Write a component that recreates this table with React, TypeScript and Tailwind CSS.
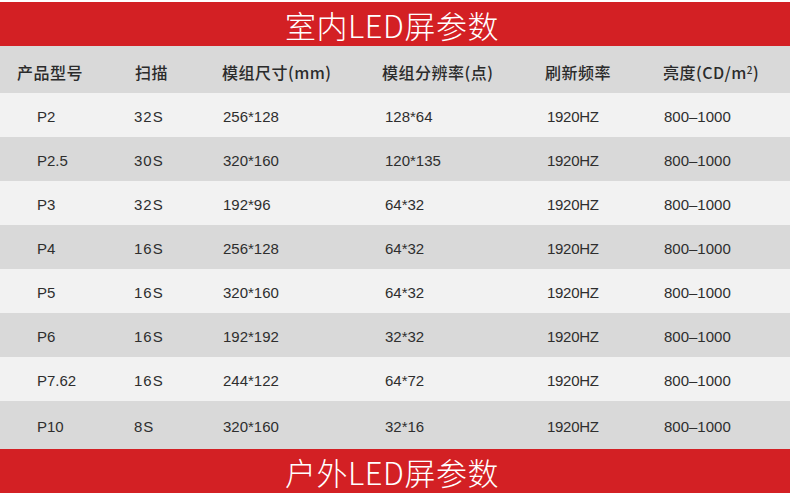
const rows = [
  ["P2", "32S", "256*128", "128*64", "1920HZ", "800–1000"],
  ["P2.5", "30S", "320*160", "120*135", "1920HZ", "800–1000"],
  ["P3", "32S", "192*96", "64*32", "1920HZ", "800–1000"],
  ["P4", "16S", "256*128", "64*32", "1920HZ", "800–1000"],
  ["P5", "16S", "320*160", "64*32", "1920HZ", "800–1000"],
  ["P6", "16S", "192*192", "32*32", "1920HZ", "800–1000"],
  ["P7.62", "16S", "244*122", "64*72", "1920HZ", "800–1000"],
  ["P10", "8S", "320*160", "32*16", "1920HZ", "800–1000"],
];

const cols = "grid grid-cols-[118px_87px_160px_163px_118px_1fr]";
const cjk = { fontFamily: '"Noto Sans CJK SC", "Noto Sans", sans-serif' };

const Title = ({ text }: { text: string }) => (
  <div
    className="h-[44px] bg-[#d32024] flex items-center justify-center pr-[6px] text-white text-[31px] tracking-[0.5px] leading-none font-light"
    style={cjk}
  >
    {text}
  </div>
);

export default function App() {
  return (
    <div className="w-[790px] h-[493px] bg-white pt-[2px] overflow-hidden">
      <Title text="室内LED屏参数" />
      <div
        className={`${cols} h-[47px] bg-[#d9d9d9] items-center pt-[5px] text-[16px] font-medium tracking-[0.5px] text-[#2b2b2b]`}
        style={cjk}
      >
        <div className="pl-[17px]">产品型号</div>
        <div className="pl-[17px]">扫描</div>
        <div className="pl-[17px]">模组尺寸(mm)</div>
        <div className="pl-[17px]">模组分辨率(点)</div>
        <div className="pl-[17px]">刷新频率</div>
        <div className="pl-[17px]">
          亮度(CD/m<sup className="text-[10px]">2</sup>)
        </div>
      </div>
      {rows.map((r, i) => (
        <div
          key={i}
          className={`${cols} items-center pt-[4px] text-[15px] text-[#2e2e2e] ${
            i === rows.length - 1 ? "h-[48px]" : "h-[44px]"
          } ${i % 2 === 0 ? "bg-[#f2f2f2]" : "bg-[#d9d9d9]"}`}
          style={{ fontFamily: '"Liberation Sans", Arial, sans-serif' }}
        >
          <div className="pl-[37px]">{r[0]}</div>
          <div className="pl-[16px] tracking-[1px]">{r[1]}</div>
          <div className="pl-[18px]">{r[2]}</div>
          <div className="pl-[20px]">{r[3]}</div>
          <div className="pl-[19px] tracking-[-0.3px]">{r[4]}</div>
          <div className="pl-[18px]">{r[5]}</div>
        </div>
      ))}
      <Title text="户外LED屏参数" />
    </div>
  );
}
